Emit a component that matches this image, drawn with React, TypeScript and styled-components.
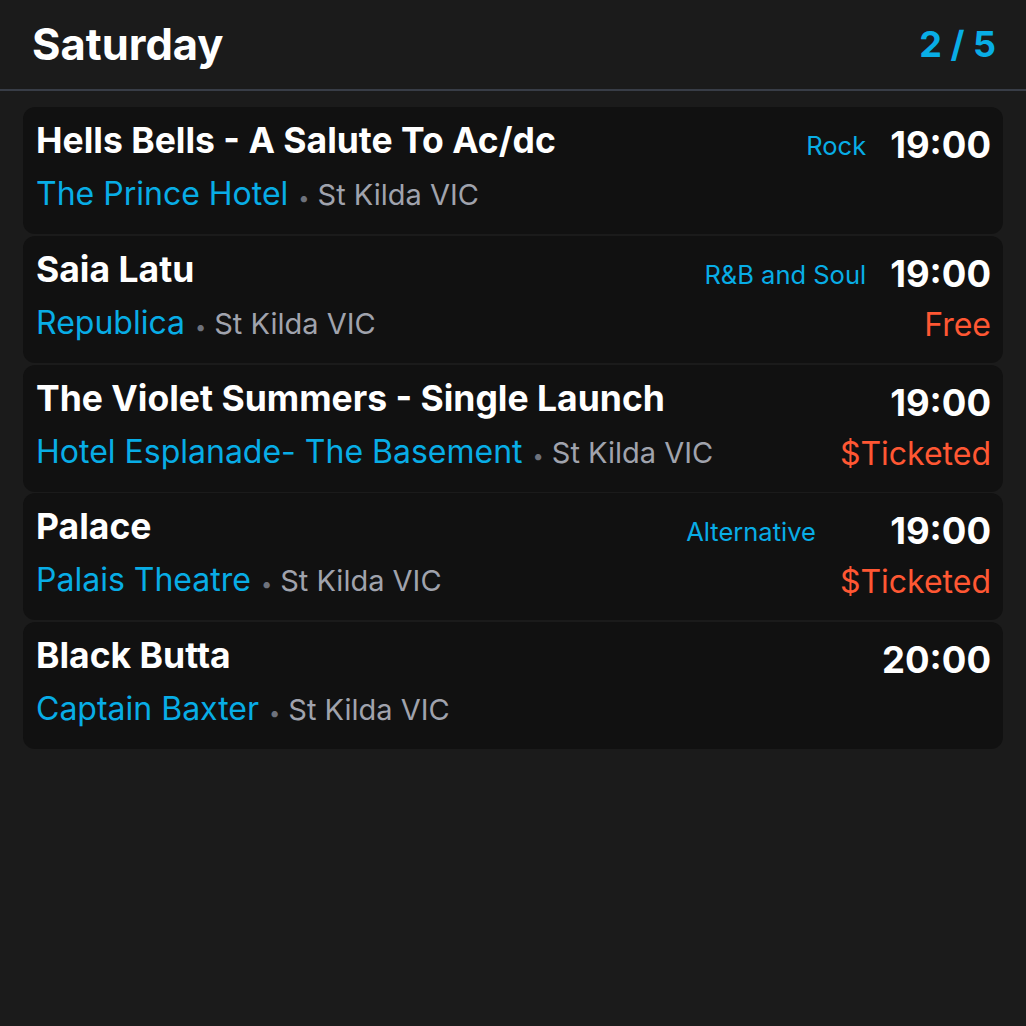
import React from "react";
import styled, { createGlobalStyle } from "styled-components";

const Global = createGlobalStyle`
  html, body { margin: 0; padding: 0; background: #1b1b1b; }
  body { font-family: Inter, "Noto Sans", sans-serif; -webkit-font-smoothing: antialiased; }
`;

const Page = styled.div`
  width: 1026px;
  min-height: 1026px;
  background: #1b1b1b;
  display: flex;
  flex-direction: column;
`;

const Header = styled.header`
  display: flex;
  align-items: center;
  justify-content: space-between;
  height: 91px;
  padding: 0 30px 0 32px;
  box-sizing: border-box;
  border-bottom: 2px solid #383d47;
`;

const DayTitle = styled.h1`
  margin: 0 0 2px;
  font-size: 43.5px;
  line-height: 50px;
  font-weight: 700;
  color: #ffffff;
`;

const Counter = styled.span`
  font-size: 36px;
  line-height: 50px;
  font-weight: 700;
  color: #08ade6;
  margin-bottom: 2px;
`;

const List = styled.div`
  display: flex;
  flex-direction: column;
  gap: 1.75px;
  padding: 16px 23px;
`;

const Card = styled.div`
  display: flex;
  align-items: flex-start;
  background: #111111;
  border-radius: 12px;
  padding: 14px 12px 0 13px;
  height: 127px;
  box-sizing: border-box;
`;

const Main = styled.div`
  flex: 1;
  min-width: 0;
  display: flex;
  flex-direction: column;
  gap: 13px;
`;

const Title = styled.div`
  font-size: 35.5px;
  font-weight: 700;
  color: #ffffff;
  line-height: 40px;
  white-space: nowrap;
`;

const VenueLine = styled.div`
  display: flex;
  align-items: baseline;
  height: 40px;
  line-height: 40px;
  white-space: nowrap;
`;

const Venue = styled.span`
  font-size: 32px;
  color: #08ade6;
`;

const Dot = styled.span`
  font-size: 20px;
  color: #6e727c;
  margin: 0 8px 0 10px;
`;

const Location = styled.span`
  font-size: 29px;
  color: #a0a3ad;
`;

const Genre = styled.span`
  font-size: 25.5px;
  color: #08ade6;
  line-height: 40px;
  margin: 5px 24px 0 0;
  white-space: nowrap;
`;

const Side = styled.div`
  display: flex;
  flex-direction: column;
  align-items: flex-end;
  gap: 8px;
  margin-top: 1px;
`;

const Time = styled.span`
  font-size: 36.5px;
  font-weight: 700;
  color: #ffffff;
  line-height: 46px;
`;

const Price = styled.span`
  font-size: 32px;
  color: #ff5733;
  line-height: 40px;
  white-space: nowrap;
`;

type Event = {
  title: string;
  venue: string;
  location: string;
  genre?: string;
  time: string;
  price?: string;
};

const events: Event[] = [
  { title: "Hells Bells - A Salute To Ac/dc", venue: "The Prince Hotel", location: "St Kilda VIC", genre: "Rock", time: "19:00" },
  { title: "Saia Latu", venue: "Republica", location: "St Kilda VIC", genre: "R&B and Soul", time: "19:00", price: "Free" },
  { title: "The Violet Summers - Single Launch", venue: "Hotel Esplanade- The Basement", location: "St Kilda VIC", time: "19:00", price: "$Ticketed" },
  { title: "Palace", venue: "Palais Theatre", location: "St Kilda VIC", genre: "Alternative", time: "19:00", price: "$Ticketed" },
  { title: "Black Butta", venue: "Captain Baxter", location: "St Kilda VIC", time: "20:00" },
];

export default function App() {
  return (
    <>
      <Global />
      <Page>
        <Header>
          <DayTitle>Saturday</DayTitle>
          <Counter>2 / 5</Counter>
        </Header>
        <List>
          {events.map((e) => (
            <Card key={e.title}>
              <Main>
                <Title>{e.title}</Title>
                <VenueLine>
                  <Venue>{e.venue}</Venue>
                  <Dot>•</Dot>
                  <Location>{e.location}</Location>
                </VenueLine>
              </Main>
              {e.genre && <Genre>{e.genre}</Genre>}
              <Side>
                <Time>{e.time}</Time>
                {e.price && <Price>{e.price}</Price>}
              </Side>
            </Card>
          ))}
        </List>
      </Page>
    </>
  );
}
